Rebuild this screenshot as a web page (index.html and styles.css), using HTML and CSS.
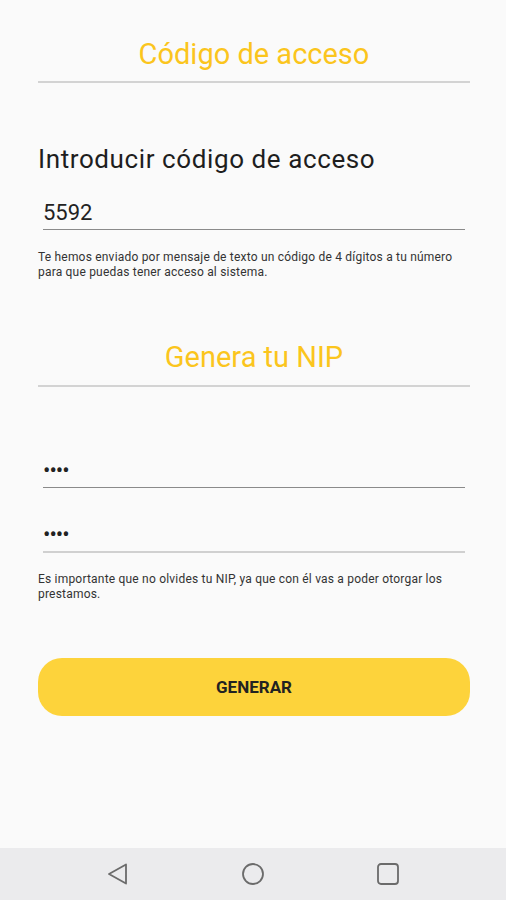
FILE: index.html
```html
<html>
<head>
	<meta charset="utf-8">
	<title>Código de acceso</title>
	<link rel="stylesheet" href="styles.css">
</head>
<body>
	<div class="screen">
		<div class="content">
			<h1 class="title">Código de acceso</h1>

			<h2 class="label">Introducir código de acceso</h2>
			<div class="field field-dark">5592</div>
			<p class="hint">Te hemos enviado por mensaje de texto un código de 4 dígitos a tu número para que puedas tener acceso al sistema.</p>

			<h1 class="title title-nip">Genera tu NIP</h1>

			<div class="field field-dark field-pin">••••</div>
			<div class="field field-light field-pin">••••</div>
			<p class="hint hint-nip">Es importante que no olvides tu NIP, ya que con él vas a poder otorgar los prestamos.</p>

			<div class="button">GENERAR</div>
		</div>

		<div class="navbar">
			<svg width="24" height="24" viewBox="0 0 24 24"><path d="M20 2.5 L3 12 L20 21.5 Z" fill="none" stroke="#6b6b6b" stroke-width="1.8" stroke-linejoin="round"/></svg>
			<svg width="24" height="24" viewBox="0 0 24 24"><circle cx="12" cy="12" r="10" fill="none" stroke="#6b6b6b" stroke-width="1.8"/></svg>
			<svg width="24" height="24" viewBox="0 0 24 24"><rect x="2" y="2" width="20" height="20" rx="3" fill="none" stroke="#6b6b6b" stroke-width="1.8"/></svg>
		</div>
	</div>
</body>
</html>
```

FILE: styles.css
```css
body {
	margin:0;
	background-color:#fafafa;
	font-family:Roboto, "Noto Sans", sans-serif;
	color:#212121;
}
.screen {
	width:506px;
	height:900px;
	display:flex;
	flex-direction:column;
}
.content {
	flex:1;
	padding:0 36px 0 38px;
}
.title {
	margin:37px 0 0 0;
	padding-bottom:10px;
	border-bottom:2px solid #d3d3d3;
	font-size:29px;
	line-height:34px;
	font-weight:normal;
	text-align:center;
	color:#fbc51d;
}
.title-nip {
	margin-top:60px;
	padding-bottom:11px;
}
.label {
	margin:61px 0 0 0;
	font-size:26px;
	line-height:30px;
	font-weight:normal;
	letter-spacing:0.6px;
	color:#1e1e1e;
}
.field {
	margin:26px 5px 0 5px;
	padding-bottom:3px;
	font-size:22px;
	line-height:26px;
	color:#222;
}
.field-dark {
	border-bottom:1px solid #8a8a8a;
}
.field-light {
	border-bottom:2px solid #d0d0d0;
}
.field-pin {
	margin-top:34px;
	letter-spacing:-1px;
}
.title-nip + .field-pin {
	margin-top:71px;
}
.hint {
	margin:20px 0 0 0;
	font-size:12px;
	line-height:15px;
	letter-spacing:0.2px;
	color:#333;
}
.hint-nip {
	margin-top:19px;
}
.button {
	margin-top:56px;
	height:58px;
	border-radius:24px;
	background-color:#fdd33b;
	display:flex;
	align-items:center;
	justify-content:center;
	font-size:17px;
	font-weight:bold;
	color:#222;
}
.navbar {
	height:52px;
	background-color:#ebebed;
	display:flex;
	align-items:center;
	justify-content:center;
	gap:111px;
}
```
